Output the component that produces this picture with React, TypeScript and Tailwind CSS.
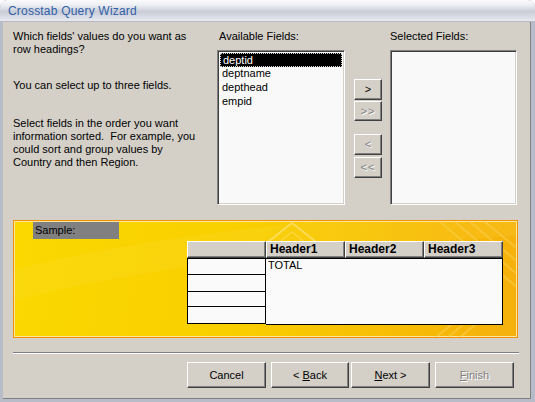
import React from 'react'

const font = "font-['Liberation_Sans',Arial,sans-serif]"

const btn3d =
  'border border-t-white border-l-white border-r-[#404040] border-b-[#404040] shadow-[inset_-1px_-1px_0_#808080] bg-[#d4d0c8]'

const sunken =
  'border border-t-[#808080] border-l-[#808080] border-r-white border-b-white shadow-[inset_1px_1px_0_#404040,inset_-1px_-1px_0_#d4d0c8]'

const disabledText = 'text-[#808080] [text-shadow:1px_1px_0_#fff]'

function Btn({ children, disabled, className = '' }: { children: React.ReactNode; disabled?: boolean; className?: string }) {
  return (
    <button
      className={`${btn3d} flex items-center justify-center text-[11px] ${disabled ? disabledText : 'text-black'} ${className}`}
    >
      {children}
    </button>
  )
}

const fields = ['deptid', 'deptname', 'depthead', 'empid']

export default function App() {
  return (
    <div className={`${font} w-[535px] h-[402px] flex flex-col bg-[#b8bcc8] rounded-t-[7px] overflow-hidden`}>
      {/* Title bar */}
      <div className="h-[22px] shrink-0 flex items-center pl-[8px] rounded-t-[7px] bg-[linear-gradient(180deg,#fbfbfd_0%,#eceef3_25%,#c9ccd7_55%,#d9dce5_80%,#e8eaef_100%)] border-b border-[#b5b9c6]">
        <span className="text-[12px] text-[#2f5fa8] tracking-[0.2px]">Crosstab Query Wizard</span>
      </div>

      {/* Body */}
      <div className="flex-1 ml-[3px] mr-[4px] mb-[3px] bg-[#d4d0c8] border-r border-b border-[#808080] flex flex-col text-[11px] text-black">
        <div className="flex pt-[8px] pl-[10px]">
          {/* left explanations */}
          <div className="w-[204px] leading-[13px]">
            <p>
              Which fields' values do you want as
              <br />
              row headings?
            </p>
            <p className="mt-[23px]">You can select up to three fields.</p>
            <p className="mt-[25px]">
              Select fields in the order you want
              <br />
              information sorted.&nbsp; For example, you
              <br />
              could sort and group values by
              <br />
              Country and then Region.
            </p>
          </div>

          {/* available */}
          <div className="w-[128px] flex flex-col">
            <div className="pl-[2px] h-[20px] leading-[13px]">Available Fields:</div>
            <div className={`${sunken} h-[155px] bg-[#f9f9f9] p-[2px]`}>
              {fields.map((f, i) => (
                <div
                  key={f}
                  className={`h-[14px] leading-[13px] pl-[2px] ${
                    i === 0 ? 'bg-black text-white border border-dotted border-[#d0d0d0] pl-[1px]' : ''
                  }`}
                >
                  {f}
                </div>
              ))}
            </div>
          </div>

          {/* move buttons */}
          <div className="w-[28px] ml-[9px] mr-[8px] flex flex-col pt-[49px]">
            <Btn className="h-[21px]">&gt;</Btn>
            <Btn disabled className="h-[20px] mt-[1px] tracking-[1px]">&gt;&gt;</Btn>
            <Btn disabled className="h-[21px] mt-[13px]">&lt;</Btn>
            <Btn disabled className="h-[21px] mt-[2px] tracking-[1px]">&lt;&lt;</Btn>
          </div>

          {/* selected */}
          <div className="w-[127px] flex flex-col">
            <div className="h-[20px] leading-[13px]">Selected Fields:</div>
            <div className={`${sunken} h-[155px] bg-[#f9f9f9]`} />
          </div>
        </div>

        {/* Sample panel */}
        <div className="relative mt-[15px] ml-[10px] w-[505px] h-[118px] border border-[#f39200] shadow-[inset_0_0_0_1px_#fde7a0] bg-[linear-gradient(100deg,#fad800_0%,#f9cf00_45%,#f7bb06_80%,#f5b00c_100%)] overflow-hidden">
          <svg className="absolute inset-0 pointer-events-none" width="505" height="118" viewBox="0 0 505 118">
            <path d="M-20 70 Q 150 20 505 0" stroke="#ffe560" strokeOpacity="0.12" strokeWidth="30" fill="none" />
            <path d="M250 24 L278 2 L306 24" stroke="#ffe890" strokeOpacity="0.55" strokeWidth="2" fill="none" />
            <path d="M262 24 L278 11 L294 24" stroke="#ffe890" strokeOpacity="0.35" strokeWidth="1.5" fill="none" />
            <g stroke="#fcd35a" strokeOpacity="0.45" strokeWidth="2">
              <path d="M440 0 L505 55" />
              <path d="M455 0 L505 42" />
              <path d="M470 0 L505 29" />
              <path d="M425 0 L505 68" />
              <path d="M420 118 L460 85" />
              <path d="M432 118 L470 86" />
              <path d="M444 118 L480 88" />
            </g>
          </svg>

          <div className="relative ml-[19px] mt-[1px] w-[86px] h-[17px] bg-[#808080] leading-[17px] pl-[2px]">Sample:</div>

          <div className="relative ml-[173px] mt-[2px] w-[316px]">
            {/* header row */}
            <div className="flex h-[17px]">
              <div className={`${btn3d} w-[79px]`} />
              {['Header1', 'Header2', 'Header3'].map(h => (
                <div key={h} className={`${btn3d} w-[79px] font-bold text-[12px] leading-[15px] pl-[3px]`}>
                  {h}
                </div>
              ))}
            </div>
            {/* body */}
            <div className="flex">
              <div className="w-[79px] flex flex-col">
                <div className="h-[17px] bg-[#fafafa] border border-black" />
                <div className="h-[17px] bg-[#fafafa] border border-t-0 border-black" />
                <div className="h-[15px] bg-[#fafafa] border border-t-0 border-black" />
                <div className="h-[17px] bg-[#fafafa] border border-t-0 border-black" />
              </div>
              <div className="w-[237px] h-[67px] bg-[#fafafa] border border-l-0 border-black pl-[2px] leading-[13px]">
                TOTAL
              </div>
            </div>
          </div>
        </div>

        {/* separator */}
        <div className="mt-[14px] ml-[10px] w-[506px] h-[2px] border-t border-[#808080] border-b border-b-white" />

        {/* bottom buttons */}
        <div className="flex mt-[8px] ml-[184px]">
          <Btn className="w-[79px] h-[26px]">Cancel</Btn>
          <Btn className="w-[78px] h-[26px] ml-[5px]">
            &lt; <span className="underline ml-[3px]">B</span>ack
          </Btn>
          <Btn className="w-[79px] h-[26px] ml-[2px]">
            <span className="underline">N</span>ext &gt;
          </Btn>
          <Btn disabled className="w-[79px] h-[26px] ml-[5px]">
            <span className="underline">F</span>inish
          </Btn>
        </div>
      </div>
    </div>
  )
}
